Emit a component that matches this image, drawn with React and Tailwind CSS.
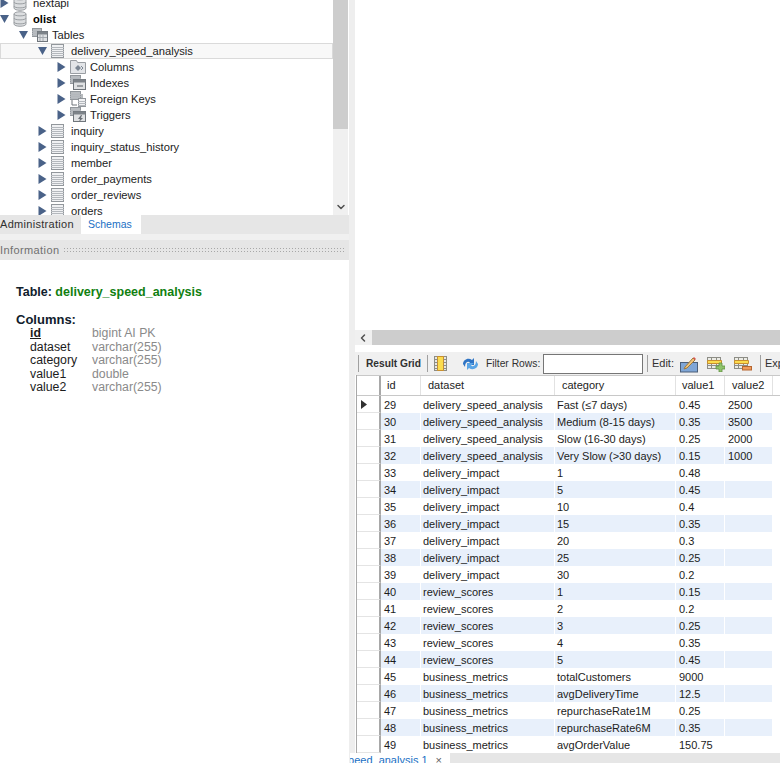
import { ChevronDown, ChevronLeft } from 'lucide-react';

const uiFont = "font-['Liberation_Sans',sans-serif]";

const indent = ['pl-0', 'pl-[19px]', 'pl-[38px]', 'pl-[57px]'];

const treeRows = [
  { label: 'nextapi', level: 0, icon: 'db', dim: true },
  { label: 'olist', level: 0, icon: 'db', open: true, bold: true },
  { label: 'Tables', level: 1, icon: 'group', open: true },
  { label: 'delivery_speed_analysis', level: 2, icon: 'table', open: true, selected: true },
  { label: 'Columns', level: 3, icon: 'columns' },
  { label: 'Indexes', level: 3, icon: 'indexes' },
  { label: 'Foreign Keys', level: 3, icon: 'fk' },
  { label: 'Triggers', level: 3, icon: 'triggers' },
  { label: 'inquiry', level: 2, icon: 'table' },
  { label: 'inquiry_status_history', level: 2, icon: 'table' },
  { label: 'member', level: 2, icon: 'table' },
  { label: 'order_payments', level: 2, icon: 'table' },
  { label: 'order_reviews', level: 2, icon: 'table' },
  { label: 'orders', level: 2, icon: 'table' },
];

const columnsInfo = [
  ['id', 'bigint AI PK'],
  ['dataset', 'varchar(255)'],
  ['category', 'varchar(255)'],
  ['value1', 'double'],
  ['value2', 'varchar(255)'],
];

const gridRows = [
  [29, 'delivery_speed_analysis', 'Fast (≤7 days)', '0.45', '2500'],
  [30, 'delivery_speed_analysis', 'Medium (8-15 days)', '0.35', '3500'],
  [31, 'delivery_speed_analysis', 'Slow (16-30 days)', '0.25', '2000'],
  [32, 'delivery_speed_analysis', 'Very Slow (>30 days)', '0.15', '1000'],
  [33, 'delivery_impact', '1', '0.48', ''],
  [34, 'delivery_impact', '5', '0.45', ''],
  [35, 'delivery_impact', '10', '0.4', ''],
  [36, 'delivery_impact', '15', '0.35', ''],
  [37, 'delivery_impact', '20', '0.3', ''],
  [38, 'delivery_impact', '25', '0.25', ''],
  [39, 'delivery_impact', '30', '0.2', ''],
  [40, 'review_scores', '1', '0.15', ''],
  [41, 'review_scores', '2', '0.2', ''],
  [42, 'review_scores', '3', '0.25', ''],
  [43, 'review_scores', '4', '0.35', ''],
  [44, 'review_scores', '5', '0.45', ''],
  [45, 'business_metrics', 'totalCustomers', '9000', ''],
  [46, 'business_metrics', 'avgDeliveryTime', '12.5', ''],
  [47, 'business_metrics', 'repurchaseRate1M', '0.25', ''],
  [48, 'business_metrics', 'repurchaseRate6M', '0.35', ''],
  [49, 'business_metrics', 'avgOrderValue', '150.75', ''],
];

const gridCols = 'grid grid-cols-[24px_40px_134px_121px_49px_48px_1fr]';
const cellPad = ['pl-[3px]', 'pl-[2px]', 'pl-[2px]', 'pl-[3px]', 'pl-[3px]'];
const headPad = ['pl-[6px]', 'pl-[7px]', 'pl-[7px]', 'pl-[6px]', 'pl-[7px]'];

function Arrow({ open }) {
  return (
    <svg width="10" height="10" viewBox="0 0 10 10" className="shrink-0">
      {open ? <path d="M0 1h9L4.500 9z" fill="#4a6288" /> : <path d="M0.500 0v10l8-5z" fill="#4a6288" />}
    </svg>
  );
}

function MiniGrid({ x, y, w, h, fill = '#f0f1f3' }) {
  const lines = [];
  for (let i = y + 3; i < y + h - 1; i += 2) lines.push(<path key={i} d={`M${x} ${i + 0.5}h${w}`} stroke="#b4b8bd" />);
  return (
    <g>
      <rect x={x + 0.5} y={y + 0.5} width={w - 1} height={h - 1} fill={fill} stroke="#92979c" />
      {lines}
    </g>
  );
}

function TreeIcon({ type }) {
  if (type === 'db') {
    return (
      <svg width="14" height="16" viewBox="0 0 14 16" className="shrink-0">
        <path d="M1 3c0-3 12-3 12 0v10c0 3-12 3-12 0z" fill="#dcdee0" stroke="#9a9ea2" />
        <path d="M1 3c0 2.500 12 2.500 12 0M1 7c0 2.500 12 2.500 12 0M1 11c0 2.500 12 2.500 12 0" fill="none" stroke="#9a9ea2" />
      </svg>
    );
  }
  if (type === 'table') {
    return (
      <svg width="14" height="14" viewBox="0 0 14 14" className="shrink-0">
        <MiniGrid x={0} y={0} w={13} h={14} />
      </svg>
    );
  }
  if (type === 'group') {
    return (
      <svg width="16" height="14" viewBox="0 0 16 14" className="shrink-0">
        <MiniGrid x={0} y={0} w={10} h={9} fill="#b8bcc0" />
        <rect x="5.500" y="3.500" width="10" height="10" fill="#dfe1e3" stroke="#6f757b" />
        <path d="M5.500 3.500h10v3h-10z" fill="#7d8389" />
        <path d="M8 7v6M11 7v6M6 9.500h9" stroke="#a4a9af" />
      </svg>
    );
  }
  if (type === 'columns') {
    return (
      <svg width="16" height="14" viewBox="0 0 16 14" className="shrink-0">
        <path d="M0.500 13.500v-13h6l1 2h8v11z" fill="#e3e5e8" stroke="#9a9ea3" />
        <path d="M5 8l3-3 3 3-3 3z" fill="#7d8794" />
        <path d="M11 6l2 2-2 2" fill="none" stroke="#7d8794" />
      </svg>
    );
  }
  return (
    <svg width="16" height="16" viewBox="0 0 16 16" className="shrink-0">
      <MiniGrid x={0} y={0} w={11} h={9} fill="#b8bcc0" />
      {type === 'fk' ? (
        <>
          <path d="M2 9v5h5" fill="none" stroke="#6f757b" />
          <MiniGrid x={8} y={7} w={8} h={9} />
          <path d="M12 3v4" stroke="#6f757b" />
        </>
      ) : (
        <>
          <rect x="3.500" y="4.500" width="12" height="10" fill="#dfe1e3" stroke="#6f757b" />
          <path d="M3.500 4.500h12v3h-12z" fill="#7d8389" />
          {type === 'indexes' ? (
            <path d="M7 11h6" stroke="#555b61" />
          ) : (
            <path d="M11 8l-3 4h2l-1 3 4-4h-2l1-3z" fill="#6a7076" />
          )}
        </>
      )}
    </svg>
  );
}

function TreeRow({ row }) {
  return (
    <div
      className={`flex h-4 items-center ${indent[row.level]} ${
        row.selected ? 'bg-[#f8f8f8] outline outline-1 -outline-offset-1 outline-[#dadada]' : ''
      }`}
    >
      <div className="flex w-[13px] shrink-0">
        <Arrow open={row.open} />
      </div>
      <div className="flex w-5 shrink-0 items-center">
        <TreeIcon type={row.icon} />
      </div>
      <span className={`whitespace-nowrap text-[11.200px] ${row.bold ? 'font-bold text-black' : 'text-[#1c1c1c]'}`}>
        {row.label}
      </span>
    </div>
  );
}

function SideTree() {
  return (
    <div className="flex h-[215px] overflow-hidden bg-white">
      <div className="w-[333px] shrink-0 -mt-[5px]">
        {treeRows.map((row) => (
          <TreeRow key={row.label} row={row} />
        ))}
      </div>
      <div className="flex w-[15px] shrink-0 flex-col bg-[#f0f0f0]">
        <div className="h-[129px] bg-[#cdcdcd]" />
        <div className="flex flex-1 items-end justify-center pb-[2px]">
          <ChevronDown size={12} strokeWidth={3} className="text-[#505050]" />
        </div>
      </div>
    </div>
  );
}

function InfoPanel() {
  return (
    <div className="flex-1 bg-white pl-4 pt-[24px]">
      <div className="text-[12.500px] leading-4 font-bold text-[#10202c]">
        Table: <span className="text-[#108010]">delivery_speed_analysis</span>
      </div>
      <div className="mt-[13px] text-[13px] leading-[14px] font-bold text-[#10202c]">Columns:</div>
      <div className="pl-[14px] text-[12.300px] leading-[13.500px]">
        {columnsInfo.map(([name, type]) => (
          <div key={name} className="flex">
            <span className={`w-[62px] text-[#1c1c1c] ${name === 'id' ? 'font-bold underline' : ''}`}>{name}</span>
            <span className="text-[#8a8a8a]">{type}</span>
          </div>
        ))}
      </div>
    </div>
  );
}

function ToolbarDivider() {
  return <div className="h-[17px] w-px shrink-0 bg-[#a0a0a0]" />;
}

function ColumnsToggleIcon() {
  return (
    <svg width="18" height="18" viewBox="0 0 18 18" className="mr-[11px] ml-[5px] shrink-0">
      <rect x="1.500" y="1.500" width="12" height="14" fill="#e8e8e4" stroke="#8d8d86" />
      <path d="M4.500 1.500h6v14h-6z" fill="#fbdc4e" stroke="#c98f2e" />
      <path d="M1.500 4.500h3M1.500 7.500h3M1.500 10.500h3M1.500 13.500h3M10.500 4.500h3M10.500 7.500h3M10.500 10.500h3M10.500 13.500h3" stroke="#8d8d86" />
    </svg>
  );
}

function RefreshIcon() {
  return (
    <svg width="17" height="16" viewBox="0 0 17 16" className="shrink-0">
      <path d="M1 8c0-4 5-7 9-4l2-2v7H5l3-2.500C6 5 3 6 3 11z" fill="#2f74c4" />
      <path d="M16 8c0 4-5 7-9 4l-2 2V7h7L9 9.500c2 1.500 5 .5 5-4.500z" fill="#5aa5e6" />
    </svg>
  );
}

function EditIcon() {
  return (
    <svg width="18" height="18" viewBox="0 0 18 18" className="shrink-0">
      <rect x="0.500" y="7.500" width="17" height="9.500" fill="#7fa6d6" stroke="#4c5f78" />
      <path d="M5 12L13 3l2 2-8 8-3 1z" fill="#f0c37a" stroke="#a07a3a" />
      <path d="M13 3l1-1 2 2-1 1z" fill="#d9534f" />
    </svg>
  );
}

function RowEditIcon({ add }) {
  return (
    <svg width="18" height="16" viewBox="0 0 18 16" className="shrink-0">
      <rect x="0.500" y="1.500" width="13" height="11" fill="#ecece6" stroke="#8d8d86" />
      <path d="M4.500 1.500v11M9.500 1.500v11M0.500 9.500h13" stroke="#8d8d86" />
      <path d="M0.500 4.500h14v3h-14z" fill="#fbdc4e" stroke="#c98f2e" />
      {add ? (
        <path d="M12 7h3v3h3v3h-3v3h-3v-3H9v-3h3z" fill="#8fc36a" stroke="#5f8f42" strokeWidth="0.800" />
      ) : (
        <rect x="8.500" y="10.500" width="9" height="3.500" fill="#ef9a5a" stroke="#b5652f" />
      )}
    </svg>
  );
}

function GridToolbar() {
  return (
    <div className="flex h-[23px] items-center overflow-hidden bg-[#f0f0f0] pl-[3px] whitespace-nowrap text-[#303030]">
      <ToolbarDivider />
      <span className="ml-[7px] w-[55px] text-[10.200px] font-bold">Result Grid</span>
      <div className="ml-[6px]">
        <ToolbarDivider />
      </div>
      <ColumnsToggleIcon />
      <RefreshIcon />
      <span className="ml-[7px] w-[53px] text-[10.300px]">Filter Rows:</span>
      <div className="ml-[4px] h-5 w-[100px] shrink-0 border border-[#767676] bg-white" />
      <div className="ml-[4px]">
        <ToolbarDivider />
      </div>
      <span className="ml-[4px] w-[21px]">Edit:</span>
      <div className="ml-[7px] flex items-center gap-[9px]">
        <EditIcon />
        <RowEditIcon add />
        <RowEditIcon />
      </div>
      <div className="ml-[8px]">
        <ToolbarDivider />
      </div>
      <span className="ml-[4px]">Export</span>
    </div>
  );
}

function ResultGrid() {
  const headers = ['id', 'dataset', 'category', 'value1', 'value2'];
  return (
    <div className="flex-1 overflow-hidden border-l border-[#a8a8a8] bg-white">
      <div className={`${gridCols} h-[21px] border-y border-[#c8c8c8] bg-white`}>
        <div className="border-r-2 border-[#a8a8a8]" />
        {headers.map((h, j) => (
          <div key={h} className={`border-r border-[#e2e2e2] leading-[19px] text-[#1c1c1c] ${headPad[j]}`}>
            {h}
          </div>
        ))}
      </div>
      {gridRows.map((row, i) => {
        const rowBg = i % 2 === 1 ? 'bg-[#e8f0fb]' : 'bg-white';
        return (
          <div key={row[0]} className={`${gridCols} h-[17px] leading-[18px] text-[#1c1c1c]`}>
            <div className="flex items-center justify-center border-r-2 border-b border-r-[#a8a8a8] border-b-[#e4e4e4] pr-[8px]">
              {i === 0 && (
                <svg width="6" height="9" viewBox="0 0 6 9">
                  <path d="M0 0v9l6-4.500z" fill="#303030" />
                </svg>
              )}
            </div>
            {row.map((cell, j) => (
              <div key={j} className={`overflow-hidden border-r border-white whitespace-nowrap ${rowBg} ${cellPad[j]}`}>
                {cell}
              </div>
            ))}
          </div>
        );
      })}
    </div>
  );
}

export default function App() {
  return (
    <div className={`flex h-[763px] w-[780px] overflow-hidden bg-white text-[11px] ${uiFont}`}>
      <div className="flex w-[349px] shrink-0 flex-col">
        <SideTree />
        <div className="flex h-[19px] bg-[#e6e6e6] text-[#303030]">
          <div className="w-[81px] leading-[19px] tracking-[0.300px]">Administration</div>
          <div className="w-[60px] bg-white pl-[7px] text-[10.500px] leading-[19px] text-[#1a6fc4]">Schemas</div>
        </div>
        <div className="h-[6px] bg-[#f0f0f0]" />
        <div className="flex h-[20px] items-center gap-[4px] bg-[#e6e6e6] text-[#707070]">
          <span className="tracking-[0.400px]">Information</span>
          <div className="mr-1 h-[6px] flex-1 bg-[radial-gradient(#a8a8a8_0.5px,transparent_0.6px)] bg-[length:3px_3px]" />
        </div>
        <InfoPanel />
      </div>
      <div className="w-[6px] shrink-0 bg-[#eeeeee]" />
      <div className="flex min-w-0 flex-1 flex-col">
        <div className="h-[330px] shrink-0 bg-white" />
        <div className="flex h-[15px] shrink-0 items-stretch">
          <div className="flex w-[17px] items-center justify-start bg-[#f0f0f0] pl-[2px]">
            <ChevronLeft size={12} strokeWidth={3} className="text-[#505050]" />
          </div>
          <div className="flex-1 bg-[#cdcdcd]" />
        </div>
        <div className="h-[7px] shrink-0 bg-white" />
        <GridToolbar />
        <div className="ml-px flex min-h-0 flex-1 flex-col">
          <ResultGrid />
        </div>
        <div className="-ml-[5px] flex h-[10px] shrink-0 overflow-hidden bg-[#e6e6e6]">
          <div className="flex h-[10px] w-[100px] items-start justify-end gap-[8px] overflow-hidden bg-white pr-[8px] whitespace-nowrap text-[#1a6fc4]">
            <span className="leading-[15px]">speed_analysis 1</span>
            <span className="leading-[15px] text-[#606060]">×</span>
          </div>
        </div>
      </div>
    </div>
  );
}
